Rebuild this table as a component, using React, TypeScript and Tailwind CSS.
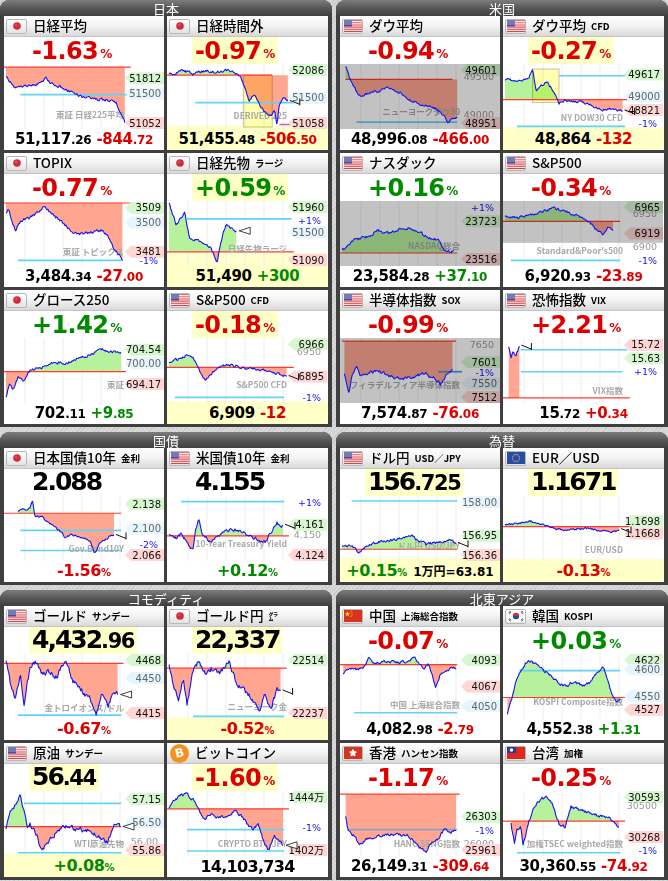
import React from 'react';

const NUM = "font-['DejaVu_Sans',sans-serif]";
const JPF = "font-['Noto_Sans_CJK_JP',sans-serif]";

type Lbl = { t: string; y: number; k: 'hi' | 'lo' | 'mid' | 'pct' | 'faint' };
type HLine = { y: number; x0: number; x1: number; c?: string };
type ChartSpec = {
  seed: number;
  pts: [number, number][];
  base: number;
  baseX?: [number, number];
  noise?: number;
  blue?: HLine[];
  labels: Lbl[];
  wm: string;
  wmY?: number;
  gray?: [number, number];
  box?: [number, number, number, number];
  yellowFrom?: number;
  upRed?: boolean;
  marker?: 'tri' | 'tick';
};

type Top =
  | { kind: 'pct'; v: string; c: 'r' | 'g'; y?: boolean }
  | { kind: 'val'; v: string; d?: string; y?: boolean };
type Bottom =
  | { kind: 'num'; n: string; d?: string; c: string; cd?: string; col: 'r' | 'g'; y?: boolean }
  | { kind: 'pct'; v: string; col: 'r' | 'g'; extra?: string; y?: boolean }
  | { kind: 'big'; v: string };

type CardSpec = {
  name: string;
  sub?: string;
  flag: 'jp' | 'us' | 'eu' | 'cn' | 'kr' | 'hk' | 'tw' | 'btc';
  top: Top;
  bottom: Bottom;
  chart: ChartSpec;
};

function rng(seed: number) {
  let a = seed >>> 0;
  return () => {
    a = (a + 0x6d2b79f5) >>> 0;
    let t = a;
    t = Math.imul(t ^ (t >>> 15), t | 1);
    t ^= t + Math.imul(t ^ (t >>> 7), t | 61);
    return ((t ^ (t >>> 14)) >>> 0) / 4294967296;
  };
}

const W = 160;
const H = 65;
const X = (x: number) => 2 + x * 120;
const Y = (y: number) => 2 + y * 61;

function makeSeries(s: ChartSpec): [number, number][] {
  const rnd = rng(s.seed);
  const pts = s.pts;
  const amp = s.noise ?? 3;
  const x0 = pts[0][0];
  const x1 = pts[pts.length - 1][0];
  const N = Math.max(4, Math.round((x1 - x0) * 140));
  const out: [number, number][] = [];
  let j = 0;
  let n = 0;
  for (let i = 0; i <= N; i++) {
    const x = x0 + ((x1 - x0) * i) / N;
    while (j < pts.length - 2 && x > pts[j + 1][0]) j++;
    const [ax, ay] = pts[j];
    const [bx, by] = pts[j + 1];
    const t = bx === ax ? 0 : (x - ax) / (bx - ax);
    const y = ay + (by - ay) * t;
    n = n * 0.45 + (rnd() - 0.5) * amp;
    let py = Y(y) + n;
    py = Math.max(1, Math.min(H - 1, py));
    out.push([X(x), py]);
  }
  return out;
}

function Chart({ s }: { s: ChartSpec }) {
  const ser = makeSeries(s);
  const by = Y(s.base);
  const bx = s.baseX ?? [-0.02, 1.03];
  const first = ser[0];
  const last = ser[ser.length - 1];
  const down = ser.map(([x, y]) => `${x},${Math.max(y, by)}`).join(' ') + ` ${last[0]},${by} ${first[0]},${by}`;
  const up = ser.map(([x, y]) => `${x},${Math.min(y, by)}`).join(' ') + ` ${last[0]},${by} ${first[0]},${by}`;
  const red = '#ffa590';
  const green = '#b6f19c';
  const line = ser.map(([x, y]) => `${x},${y}`).join(' ');
  const grid = [1, 2, 3, 4, 5, 6].map((k) => 2 + 19 * k);
  const [lx, ly] = last;
  return (
    <svg width={W} height={H} viewBox={`0 0 ${W} ${H}`} className="block shrink-0">
      {s.yellowFrom !== undefined && (
        <rect x={0} y={Y(s.yellowFrom)} width={W} height={H} fill="#ffffcc" />
      )}
      {grid.map((g) => (
        <line key={g} x1={g} x2={g} y1={0} y2={H} stroke="#ededed" strokeWidth={1} />
      ))}
      <polygon points={down} fill={red} />
      <polygon points={up} fill={s.upRed ? red : green} />
      {s.box && (
        <rect
          x={X(s.box[0])}
          y={Y(s.box[1])}
          width={X(s.box[2]) - X(s.box[0])}
          height={Y(s.box[3]) - Y(s.box[1])}
          fill="#ffffb0"
          stroke="#c9c4a0"
          strokeWidth={1}
          className="mix-blend-multiply"
        />
      )}
      <line x1={X(bx[0])} x2={X(bx[1])} y1={by} y2={by} stroke="#ff3b30" strokeWidth={1.2} />
      {(s.blue ?? []).map((b, i) => (
        <line key={i} x1={X(b.x0)} x2={X(b.x1)} y1={Y(b.y)} y2={Y(b.y)} stroke={b.c ?? '#62d3f7'} strokeWidth={1.6} />
      ))}
      <text
        x={120}
        y={Y(s.wmY ?? 0.86) + 3}
        textAnchor="end"
        fontSize={8.5}
        fontWeight={700}
        fill="#a9a9a9"
        fontFamily="'Noto Sans CJK JP', 'DejaVu Sans', sans-serif"
      >
        {s.wm}
      </text>
      {s.labels.map((l, i) => {
        const yy = Math.max(6, Math.min(H - 6, Y(l.y)));
        if (l.k === 'pct' || l.k === 'faint') {
          return (
            <text
              key={i}
              x={154}
              y={yy + 3.5}
              textAnchor="end"
              fontSize={9.5}
              fill={l.k === 'pct' ? '#1010ff' : '#9a9a9a'}
              fontFamily="'DejaVu Sans', sans-serif"
            >
              {l.t}
            </text>
          );
        }
        const fill = l.k === 'hi' ? '#d6f7cf' : l.k === 'lo' ? '#ffd6d4' : '#e6f6fe';
        const tc = l.k === 'mid' ? '#666' : '#111';
        return (
          <g key={i}>
            <polygon points={`121,${yy} 127,${yy - 6} 160,${yy - 6} 160,${yy + 6} 127,${yy + 6}`} fill={fill} />
            <text
              x={157}
              y={yy + 3.6}
              textAnchor="end"
              fontSize={10}
              fill={tc}
              fontFamily="'DejaVu Sans', 'Noto Sans CJK JP', sans-serif"
            >
              {l.t}
            </text>
          </g>
        );
      })}
      {s.gray && (
        <rect x={0} y={Y(s.gray[0]) - 2} width={W} height={Y(s.gray[1]) - Y(s.gray[0]) + 4} fill="#c2c2c2" className="mix-blend-multiply" />
      )}
      <polyline points={line} fill="none" stroke="#1414f0" strokeWidth={1.1} strokeLinejoin="round" />
      {s.marker === 'tri' && (
        <polygon points={`${lx + 3},${ly} ${lx + 14},${ly - 3.5} ${lx + 14},${ly + 3.5}`} fill="#fff" stroke="#111" strokeWidth={0.8} />
      )}
      {s.marker === 'tick' && (
        <g stroke="#111" strokeWidth={1}>
          <line x1={lx + 2} y1={ly - 1} x2={lx + 12} y2={ly + 3} />
          <line x1={lx + 12} y1={ly - 3} x2={lx + 12} y2={ly + 4} />
        </g>
      )}
    </svg>
  );
}

function Flag({ k }: { k: CardSpec['flag'] }) {
  if (k === 'btc') {
    return (
      <div className="w-[19px] h-[19px] rounded-full bg-[#f4921d] flex items-center justify-center ml-[1px]">
        <span className={`${NUM} text-white font-bold text-[12px] leading-none -rotate-[14deg]`}>B</span>
      </div>
    );
  }
  let inner: React.ReactNode = null;
  if (k === 'jp') {
    inner = (
      <svg width={18} height={12} viewBox="0 0 18 12">
        <circle cx={9} cy={6} r={3.8} fill="#d3293d" />
        <circle cx={8.2} cy={5} r={1.4} fill="#e86070" opacity={0.6} />
      </svg>
    );
  } else if (k === 'us') {
    inner = (
      <svg width={18} height={12} viewBox="0 0 18 12">
        <rect width={18} height={12} fill="#fff" />
        {Array.from({ length: 7 }).map((_, i) => (
          <rect key={i} x={0} y={i * (12 / 6.5)} width={18} height={12 / 13} fill="#d8343c" />
        ))}
        <rect x={0} y={0} width={8} height={6.5} fill="#4a4c9c" />
        <rect x={0} y={0} width={18} height={5} fill="#fff" opacity={0.25} />
      </svg>
    );
  } else if (k === 'eu') {
    inner = (
      <svg width={18} height={12} viewBox="0 0 18 12">
        <rect width={18} height={12} fill="#2a4aa8" />
        {Array.from({ length: 12 }).map((_, i) => {
          const a = (i / 12) * Math.PI * 2;
          return <circle key={i} cx={9 + Math.cos(a) * 3.6} cy={6 + Math.sin(a) * 3.6} r={0.55} fill="#f2d53c" />;
        })}
      </svg>
    );
  } else if (k === 'cn') {
    inner = (
      <svg width={18} height={12} viewBox="0 0 18 12">
        <rect width={18} height={12} fill="#d9321f" />
        <polygon points="3.5,1.2 4.3,3.2 6.3,3.2 4.7,4.4 5.3,6.4 3.5,5.2 1.7,6.4 2.3,4.4 0.7,3.2 2.7,3.2" fill="#ffd21f" />
        <circle cx={7} cy={1.5} r={0.6} fill="#ffd21f" />
        <circle cx={8} cy={3} r={0.6} fill="#ffd21f" />
        <circle cx={8} cy={5} r={0.6} fill="#ffd21f" />
        <circle cx={7} cy={6.5} r={0.6} fill="#ffd21f" />
      </svg>
    );
  } else if (k === 'kr') {
    inner = (
      <svg width={18} height={12} viewBox="0 0 18 12">
        <rect width={18} height={12} fill="#fff" />
        <path d="M5.8,6 A3.2,3.2 0 0 1 12.2,6 Z" fill="#cd2e3a" />
        <path d="M5.8,6 A3.2,3.2 0 0 0 12.2,6 Z" fill="#1d4ea0" />
        <g fill="#222">
          <rect x={1.5} y={1.5} width={2.6} height={0.6} transform="rotate(-35 2.8 1.8)" />
          <rect x={1.8} y={2.6} width={2.6} height={0.6} transform="rotate(-35 3.1 2.9)" />
          <rect x={14} y={1.5} width={2.6} height={0.6} transform="rotate(35 15.3 1.8)" />
          <rect x={13.7} y={2.6} width={2.6} height={0.6} transform="rotate(35 15 2.9)" />
          <rect x={1.8} y={9} width={2.6} height={0.6} transform="rotate(35 3.1 9.3)" />
          <rect x={1.5} y={10.1} width={2.6} height={0.6} transform="rotate(35 2.8 10.4)" />
          <rect x={13.7} y={9} width={2.6} height={0.6} transform="rotate(-35 15 9.3)" />
          <rect x={14} y={10.1} width={2.6} height={0.6} transform="rotate(-35 15.3 10.4)" />
        </g>
      </svg>
    );
  } else if (k === 'hk') {
    inner = (
      <svg width={18} height={12} viewBox="0 0 18 12">
        <rect width={18} height={12} fill="#d9321f" />
        {[0, 72, 144, 216, 288].map((r) => (
          <ellipse key={r} cx={9} cy={4.2} rx={1.2} ry={1.9} fill="#fff" transform={`rotate(${r} 9 6)`} />
        ))}
      </svg>
    );
  } else if (k === 'tw') {
    inner = (
      <svg width={18} height={12} viewBox="0 0 18 12">
        <rect width={18} height={12} fill="#e0261f" />
        <rect width={9} height={6} fill="#1f3aa0" />
        <circle cx={4.5} cy={3} r={1.8} fill="#fff" />
      </svg>
    );
  }
  return (
    <div className="w-[21px] h-[15px] rounded-[2px] border border-[#b7b7b7] bg-linear-to-b from-white to-[#e3e3e3] flex items-center justify-center">
      {inner}
    </div>
  );
}

function TopRow({ t }: { t: Top }) {
  if (t.kind === 'pct') {
    return (
      <div className="h-[27px] shrink-0 flex pl-[25px]">
        <div className={`h-full flex items-center px-[3px] ${t.y ? 'bg-[#ffffc8]' : ''}`}>
          <span
            className={`${NUM} font-bold text-[24px] leading-none tracking-[-0.6px] ${t.c === 'g' ? 'text-[#008a00]' : 'text-[#dc0000]'}`}
          >
            {t.v}
          </span>
          <span className={`${NUM} font-bold text-[12px] leading-none ml-[2px] mt-[7px] ${t.c === 'g' ? 'text-[#008a00]' : 'text-[#dc0000]'}`}>
            %
          </span>
        </div>
      </div>
    );
  }
  return (
    <div className="h-[27px] shrink-0 flex pl-[25px]">
      <div className={`h-full flex items-end pb-[2px] px-[3px] ${t.y ? 'bg-[#ffffc8]' : ''}`}>
        <span className={`${NUM} font-bold text-[25px] leading-none tracking-[-2px] text-black`}>{t.v}</span>
        {t.d && <span className={`${NUM} font-bold text-[21px] leading-none tracking-[-1.4px] text-black`}>{t.d}</span>}
      </div>
    </div>
  );
}

function BottomRow({ b }: { b: Bottom }) {
  if (b.kind === 'num') {
    const col = b.col === 'g' ? 'text-[#008a00]' : 'text-[#dc0000]';
    return (
      <div className={`flex-1 min-h-0 flex items-center justify-center ${NUM} font-bold tracking-[-0.3px] ${b.y ? 'bg-[#ffffc8]' : ''}`}>
        <div className="flex items-baseline leading-[17px]">
          <span className="text-[15px] text-black">{b.n}</span>
          {b.d && <span className="text-[12px] text-black">{b.d}</span>}
          <span className={`text-[15px] ml-[5px] ${col}`}>{b.c}</span>
          {b.cd && <span className={`text-[12px] ${col}`}>{b.cd}</span>}
        </div>
      </div>
    );
  }
  if (b.kind === 'pct') {
    const col = b.col === 'g' ? 'text-[#008a00]' : 'text-[#dc0000]';
    return (
      <div className={`flex-1 min-h-0 flex items-center justify-center ${NUM} font-bold ${b.y ? 'bg-[#ffffc8]' : ''}`}>
        <div className="flex items-baseline leading-[17px]">
          <span className={`text-[16px] tracking-[-0.4px] ${col}`}>{b.v}</span>
          <span className={`text-[10px] ${col}`}>%</span>
          {b.extra && <span className="text-[12px] text-black ml-[6px] font-['DejaVu_Sans','Noto_Sans_CJK_JP',sans-serif]">{b.extra}</span>}
        </div>
      </div>
    );
  }
  return (
    <div className={`flex-1 min-h-0 flex items-center justify-center ${NUM} font-bold`}>
      <span className="text-[16px] leading-[17px] tracking-[-0.7px] text-black">{b.v}</span>
    </div>
  );
}

function Card({ c }: { c: CardSpec }) {
  return (
    <div className="h-[134px] bg-white flex flex-col overflow-hidden">
      <div className="h-[21px] shrink-0 flex items-center bg-linear-to-b from-white via-[#f3f3f3] to-[#d9d9d9] border-b border-[#c4c4c4] pl-[2px]">
        <Flag k={c.flag} />
        <span className={`${JPF} text-[13.5px] font-medium text-black ml-[6px] leading-none`}>{c.name}</span>
        {c.sub && <span className={`${JPF} text-[9.5px] font-bold text-black ml-[5px] leading-none mt-[2px]`}>{c.sub}</span>}
      </div>
      <TopRow t={c.top} />
      <Chart s={c.chart} />
      <BottomRow b={c.bottom} />
    </div>
  );
}

function Section({ title, cards }: { title: string; cards: CardSpec[] }) {
  return (
    <div className="rounded-t-[9px] bg-[#3f3f3f] pb-[3px] overflow-hidden">
      <div className={`h-[16px] flex items-center justify-center bg-linear-to-b from-[#7d7d7d] via-[#585858] to-[#3f3f3f] text-white text-[13px] leading-none ${JPF}`}>
        {title}
      </div>
      <div className="grid grid-cols-[160px_161px] gap-[3px] pl-[4px]">
        {cards.map((c, i) => (
          <Card key={i} c={c} />
        ))}
      </div>
    </div>
  );
}

const c1: CardSpec = {
  name: '日経平均', flag: 'jp',
  top: { kind: 'pct', v: '-1.63', c: 'r' },
  bottom: { kind: 'num', n: '51,117', d: '.26', c: '-844', cd: '.72', col: 'r' },
  chart: {
    seed: 1, base: 0.02, baseX: [-0.02, 1.04], noise: 2.5,
    pts: [[0, 0.18], [0.03, 0.24], [0.08, 0.36], [0.15, 0.34], [0.25, 0.3], [0.3, 0.27], [0.33, 0.2], [0.37, 0.27], [0.4, 0.29], [0.58, 0.46], [0.65, 0.52], [0.75, 0.54], [0.85, 0.56], [0.92, 0.6], [0.96, 0.8], [0.99, 0.92]],
    blue: [{ y: 0.47, x0: 0.12, x1: 1.04 }],
    labels: [{ t: '51812', y: 0.2, k: 'hi' }, { t: '51500', y: 0.45, k: 'mid' }, { t: '51052', y: 0.95, k: 'lo' }],
    wm: '東証 日経225平均', wmY: 0.8,
  },
};
const c2: CardSpec = {
  name: '日経時間外', flag: 'jp',
  top: { kind: 'pct', v: '-0.97', c: 'r', y: true },
  bottom: { kind: 'num', n: '51,455', d: '.48', c: '-506', cd: '.50', col: 'r', y: true },
  chart: {
    seed: 2, base: 0.15, baseX: [-0.02, 0.86], noise: 2.2,
    pts: [[0, 0.12], [0.05, 0.14], [0.1, 0.06], [0.2, 0.13], [0.3, 0.08], [0.4, 0.1], [0.5, 0.06], [0.56, 0.12], [0.6, 0.2], [0.64, 0.4], [0.67, 0.58], [0.71, 0.46], [0.75, 0.62], [0.8, 0.76], [0.85, 0.82], [0.88, 0.72], [0.9, 0.98], [0.92, 0.62], [0.96, 0.52], [0.99, 0.57]],
    blue: [{ y: 0.6, x0: 0.22, x1: 1.04 }, { y: 0.96, x0: 0.92, x1: 1.04, c: '#e24ae0' }],
    box: [0.62, 0.15, 0.86, 1.0],
    labels: [{ t: '52086', y: 0.02, k: 'hi' }, { t: '51500', y: 0.52, k: 'mid' }, { t: '51058', y: 0.98, k: 'lo' }],
    wm: 'DERIVED 225', wmY: 0.82, yellowFrom: 0.98, marker: 'tick',
  },
};
const c3: CardSpec = {
  name: 'ダウ平均', flag: 'us',
  top: { kind: 'pct', v: '-0.94', c: 'r' },
  bottom: { kind: 'num', n: '48,996', d: '.08', c: '-466', cd: '.00', col: 'r' },
  chart: {
    seed: 3, base: 0.22, baseX: [0.03, 0.92], noise: 2.2,
    pts: [[0.03, 0.0], [0.05, 0.12], [0.08, 0.28], [0.12, 0.42], [0.16, 0.5], [0.22, 0.44], [0.3, 0.42], [0.38, 0.34], [0.45, 0.4], [0.5, 0.46], [0.55, 0.55], [0.62, 0.6], [0.7, 0.64], [0.78, 0.7], [0.84, 0.8], [0.88, 0.92], [0.93, 0.86], [0.96, 0.84]],
    blue: [{ y: 0.92, x0: 0.12, x1: 0.96 }],
    gray: [0, 1],
    labels: [{ t: '49601', y: 0.06, k: 'hi' }, { t: '49500', y: 0.17, k: 'faint' }, { t: '49000', y: 0.8, k: 'faint' }, { t: '48951', y: 0.95, k: 'lo' }],
    wm: 'ニューヨークダウ30', wmY: 0.76,
  },
};
const c4: CardSpec = {
  name: 'ダウ平均', sub: 'CFD', flag: 'us',
  top: { kind: 'pct', v: '-0.27', c: 'r', y: true },
  bottom: { kind: 'num', n: '48,864', c: '-132', col: 'r', y: true },
  chart: {
    seed: 4, base: 0.55, baseX: [-0.02, 1.04], noise: 2,
    pts: [[0, 0.22], [0.1, 0.24], [0.2, 0.2], [0.23, 0.05], [0.26, 0.42], [0.3, 0.32], [0.35, 0.26], [0.42, 0.46], [0.45, 0.62], [0.5, 0.56], [0.6, 0.58], [0.7, 0.62], [0.8, 0.72], [0.9, 0.7], [0.98, 0.74]],
    box: [0.23, 0.05, 0.45, 0.6],
    blue: [{ y: 0.16, x0: 0.45, x1: 1.0 }, { y: 0.99, x0: 0.1, x1: 1.0 }],
    labels: [{ t: '49617', y: 0.14, k: 'hi' }, { t: '49000', y: 0.5, k: 'mid' }, { t: '48821', y: 0.72, k: 'lo' }, { t: '-1%', y: 0.98, k: 'pct' }],
    wm: 'NY DOW30 CFD', wmY: 0.86, yellowFrom: 1.0, marker: 'tick',
  },
};
const c5: CardSpec = {
  name: 'TOPIX', flag: 'jp',
  top: { kind: 'pct', v: '-0.77', c: 'r' },
  bottom: { kind: 'num', n: '3,484', d: '.34', c: '-27', cd: '.00', col: 'r' },
  chart: {
    seed: 5, base: 0.0, baseX: [-0.02, 1.04], noise: 2.6,
    pts: [[0, 0.16], [0.02, 0.1], [0.05, 0.3], [0.08, 0.45], [0.12, 0.3], [0.2, 0.24], [0.28, 0.12], [0.32, 0.05], [0.35, 0.12], [0.55, 0.46], [0.6, 0.52], [0.7, 0.48], [0.8, 0.45], [0.85, 0.55], [0.9, 0.75], [0.95, 0.88], [0.97, 0.95]],
    blue: [{ y: 0.94, x0: 0.1, x1: 0.96 }],
    labels: [{ t: '3509', y: 0.08, k: 'hi' }, { t: '3500', y: 0.32, k: 'mid' }, { t: '3481', y: 0.8, k: 'lo' }, { t: '-1%', y: 0.96, k: 'pct' }],
    wm: '東証 トピックス', wmY: 0.8,
  },
};
const c6: CardSpec = {
  name: '日経先物', sub: 'ラージ', flag: 'jp',
  top: { kind: 'pct', v: '+0.59', c: 'g', y: true },
  bottom: { kind: 'num', n: '51,490', c: '+300', col: 'g', y: true },
  chart: {
    seed: 6, base: 0.8, baseX: [-0.02, 1.04], noise: 2.5,
    pts: [[0, 0.0], [0.03, 0.2], [0.06, 0.35], [0.1, 0.26], [0.13, 0.15], [0.17, 0.55], [0.22, 0.6], [0.3, 0.66], [0.35, 0.74], [0.38, 0.9], [0.4, 1.0], [0.42, 0.78], [0.45, 0.5], [0.48, 0.36], [0.52, 0.42], [0.56, 0.46]],
    blue: [{ y: 0.26, x0: 0.15, x1: 1.02 }],
    labels: [{ t: '51960', y: 0.06, k: 'hi' }, { t: '+1%', y: 0.28, k: 'pct' }, { t: '51500', y: 0.48, k: 'mid' }, { t: '51090', y: 0.97, k: 'lo' }],
    wm: '日経先物ラージ', wmY: 0.76, yellowFrom: 0.82, marker: 'tri',
  },
};
const c7: CardSpec = {
  name: 'ナスダック', flag: 'us',
  top: { kind: 'pct', v: '+0.16', c: 'g' },
  bottom: { kind: 'num', n: '23,584', d: '.28', c: '+37', cd: '.10', col: 'g' },
  chart: {
    seed: 7, base: 0.82, baseX: [-0.02, 0.96], noise: 2.5,
    pts: [[0, 0.78], [0.05, 0.7], [0.1, 0.6], [0.2, 0.56], [0.3, 0.46], [0.4, 0.5], [0.5, 0.4], [0.6, 0.43], [0.7, 0.55], [0.8, 0.6], [0.85, 0.75], [0.9, 0.8], [0.93, 0.78]],
    gray: [0, 1],
    labels: [{ t: '+1%', y: 0.02, k: 'pct' }, { t: '23723', y: 0.3, k: 'hi' }, { t: '23516', y: 0.92, k: 'lo' }],
    wm: 'NASDAQ総合', wmY: 0.7,
  },
};
const c8: CardSpec = {
  name: 'S&P500', flag: 'us',
  top: { kind: 'pct', v: '-0.34', c: 'r' },
  bottom: { kind: 'num', n: '6,920', d: '.93', c: '-23', cd: '.89', col: 'r' },
  chart: {
    seed: 8, base: 0.3, baseX: [-0.02, 0.96], noise: 2.3,
    pts: [[0, 0.22], [0.1, 0.25], [0.2, 0.2], [0.3, 0.15], [0.4, 0.08], [0.5, 0.14], [0.6, 0.2], [0.7, 0.3], [0.76, 0.44], [0.82, 0.52], [0.86, 0.4], [0.9, 0.46]],
    gray: [0, 0.62],
    blue: [{ y: 0.94, x0: 0.05, x1: 0.96 }],
    labels: [{ t: '6965', y: 0.04, k: 'hi' }, { t: '6950', y: 0.17, k: 'faint' }, { t: '6919', y: 0.5, k: 'lo' }, { t: '6900', y: 0.72, k: 'faint' }, { t: '-1%', y: 0.94, k: 'pct' }],
    wm: "Standard&Poor's500", wmY: 0.78,
  },
};
const c9: CardSpec = {
  name: 'グロース250', flag: 'jp',
  top: { kind: 'pct', v: '+1.42', c: 'g' },
  bottom: { kind: 'num', n: '702', d: '.11', c: '+9', cd: '.85', col: 'g' },
  chart: {
    seed: 9, base: 0.52, baseX: [-0.02, 1.0], noise: 2.4,
    pts: [[0, 0.95], [0.03, 0.7], [0.06, 0.82], [0.1, 0.6], [0.15, 0.66], [0.2, 0.5], [0.3, 0.45], [0.4, 0.36], [0.5, 0.38], [0.6, 0.3], [0.7, 0.25], [0.8, 0.15], [0.86, 0.18], [0.96, 0.2]],
    labels: [{ t: '704.54', y: 0.16, k: 'hi' }, { t: '700.00', y: 0.38, k: 'mid' }, { t: '694.17', y: 0.72, k: 'lo' }],
    wm: '東証', wmY: 0.74,
  },
};
const c10: CardSpec = {
  name: 'S&P500', sub: 'CFD', flag: 'us',
  top: { kind: 'pct', v: '-0.18', c: 'r', y: true },
  bottom: { kind: 'num', n: '6,909', c: '-12', col: 'r', y: true },
  chart: {
    seed: 10, base: 0.45, baseX: [-0.02, 1.04], noise: 2.2,
    pts: [[0, 0.36], [0.1, 0.3], [0.15, 0.24], [0.2, 0.3], [0.25, 0.5], [0.3, 0.66], [0.35, 0.56], [0.4, 0.46], [0.5, 0.4], [0.6, 0.45], [0.7, 0.47], [0.8, 0.5], [0.9, 0.55], [0.98, 0.6]],
    blue: [{ y: 0.94, x0: 0.05, x1: 0.96 }],
    labels: [{ t: '6966', y: 0.07, k: 'hi' }, { t: '6950', y: 0.19, k: 'faint' }, { t: '6895', y: 0.6, k: 'lo' }, { t: '-1%', y: 0.94, k: 'pct' }],
    wm: 'S&P500 CFD', wmY: 0.74, yellowFrom: 1.0, marker: 'tick',
  },
};
const c11: CardSpec = {
  name: '半導体指数', sub: 'SOX', flag: 'us',
  top: { kind: 'pct', v: '-0.99', c: 'r' },
  bottom: { kind: 'num', n: '7,574', d: '.87', c: '-76', cd: '.06', col: 'r' },
  chart: {
    seed: 11, base: 0.02, baseX: [0.0, 0.95], noise: 3,
    pts: [[0.02, 0.55], [0.04, 0.72], [0.06, 0.88], [0.08, 0.6], [0.12, 0.42], [0.15, 0.6], [0.2, 0.55], [0.3, 0.5], [0.4, 0.6], [0.5, 0.64], [0.6, 0.6], [0.7, 0.55], [0.78, 0.64], [0.82, 0.72], [0.88, 0.55], [0.92, 0.5]],
    gray: [0, 1],
    blue: [{ y: 0.52, x0: 0.8, x1: 1.0, c: '#3a9ac8' }],
    labels: [{ t: '7650', y: 0.02, k: 'faint' }, { t: '7601', y: 0.36, k: 'hi' }, { t: '-1%', y: 0.53, k: 'pct' }, { t: '7550', y: 0.71, k: 'mid' }, { t: '7512', y: 0.94, k: 'lo' }],
    wm: 'フィラデルフィア半導体指数', wmY: 0.74,
  },
};
const c12: CardSpec = {
  name: '恐怖指数', sub: 'VIX', flag: 'us',
  top: { kind: 'pct', v: '+2.21', c: 'r' },
  bottom: { kind: 'num', n: '15', d: '.72', c: '+0', cd: '.34', col: 'r' },
  chart: {
    seed: 12, base: 0.95, baseX: [-0.02, 1.04], noise: 2.5, upRed: true,
    pts: [[0.03, 0.12], [0.05, 0.28], [0.07, 0.2], [0.09, 0.26], [0.12, 0.1]],
    blue: [{ y: 0.16, x0: 0.13, x1: 1.02 }, { y: 0.52, x0: 0.13, x1: 0.98 }],
    labels: [{ t: '15.72', y: 0.08, k: 'lo' }, { t: '15.63', y: 0.3, k: 'hi' }, { t: '+1%', y: 0.52, k: 'pct' }],
    wm: 'VIX指数', wmY: 0.84, marker: 'tick',
  },
};
const c13: CardSpec = {
  name: '日本国債10年', sub: '金利', flag: 'jp',
  top: { kind: 'val', v: '2.088' },
  bottom: { kind: 'pct', v: '-1.56', col: 'r' },
  chart: {
    seed: 13, base: 0.25, baseX: [-0.02, 0.96], noise: 2,
    pts: [[0.1, 0.22], [0.15, 0.2], [0.2, 0.17], [0.22, 0.03], [0.24, 0.3], [0.3, 0.32], [0.35, 0.4], [0.45, 0.55], [0.5, 0.65], [0.55, 0.6], [0.6, 0.62], [0.65, 0.65], [0.7, 0.72], [0.74, 0.9], [0.78, 0.75], [0.84, 0.66], [0.9, 0.6]],
    blue: [{ y: 0.53, x0: 0.12, x1: 0.96 }, { y: 0.86, x0: 0.12, x1: 0.96 }],
    labels: [{ t: '2.138', y: 0.1, k: 'hi' }, { t: '2.100', y: 0.5, k: 'mid' }, { t: '-2%', y: 0.76, k: 'pct' }, { t: '2.066', y: 0.97, k: 'lo' }],
    wm: 'Gov.Bond10Y', wmY: 0.84, marker: 'tick',
  },
};
const c14: CardSpec = {
  name: '米国債10年', sub: '金利', flag: 'us',
  top: { kind: 'val', v: '4.155' },
  bottom: { kind: 'pct', v: '+0.12', col: 'g' },
  chart: {
    seed: 14, base: 0.62, baseX: [-0.02, 1.0], noise: 3,
    pts: [[0, 0.6], [0.05, 0.66], [0.1, 0.6], [0.15, 0.72], [0.2, 0.86], [0.22, 0.55], [0.25, 0.35], [0.28, 0.6], [0.35, 0.74], [0.4, 0.64], [0.45, 0.55], [0.5, 0.52], [0.6, 0.53], [0.65, 0.6], [0.7, 0.66], [0.8, 0.72], [0.85, 0.56], [0.9, 0.42], [0.95, 0.46]],
    blue: [{ y: 0.06, x0: 0.1, x1: 0.96 }],
    labels: [{ t: '+1%', y: 0.06, k: 'pct' }, { t: '4.161', y: 0.44, k: 'hi' }, { t: '4.150', y: 0.6, k: 'faint' }, { t: '4.124', y: 0.95, k: 'lo' }],
    wm: '10-Year Treasury Yield', wmY: 0.76, marker: 'tick',
  },
};
const c15: CardSpec = {
  name: 'ドル円', sub: 'USD／JPY', flag: 'us',
  top: { kind: 'val', v: '156', d: '.725', y: true },
  bottom: { kind: 'pct', v: '+0.15', col: 'g', extra: '1万円=63.81', y: true },
  chart: {
    seed: 15, base: 0.84, baseX: [-0.02, 0.96], noise: 2.4,
    pts: [[0, 0.8], [0.05, 0.78], [0.1, 0.82], [0.15, 0.9], [0.2, 0.8], [0.3, 0.72], [0.4, 0.7], [0.5, 0.65], [0.58, 0.6], [0.63, 0.7], [0.7, 0.76], [0.8, 0.72], [0.9, 0.7], [0.95, 0.72]],
    blue: [{ y: 0.05, x0: 0.08, x1: 0.96 }],
    labels: [{ t: '158.00', y: 0.05, k: 'mid' }, { t: '156.95', y: 0.62, k: 'hi' }, { t: '156.36', y: 0.94, k: 'lo' }],
    wm: 'ドル円 USD/JPY', wmY: 0.78, yellowFrom: 0.98, marker: 'tick',
  },
};
const c16: CardSpec = {
  name: 'EUR／USD', flag: 'eu',
  top: { kind: 'val', v: '1.1671', y: true },
  bottom: { kind: 'pct', v: '-0.13', col: 'r', y: true },
  chart: {
    seed: 16, base: 0.47, baseX: [-0.02, 1.04], noise: 1.8,
    pts: [[0, 0.44], [0.1, 0.42], [0.2, 0.38], [0.3, 0.42], [0.4, 0.5], [0.5, 0.53], [0.6, 0.5], [0.7, 0.5], [0.8, 0.54], [0.9, 0.56], [0.95, 0.53]],
    labels: [{ t: '1.1698', y: 0.38, k: 'hi' }, { t: '1.1668', y: 0.58, k: 'lo' }],
    wm: 'EUR/USD', wmY: 0.86, yellowFrom: 1.0, marker: 'tick',
  },
};
const c17: CardSpec = {
  name: 'ゴールド', sub: 'サンデー', flag: 'us',
  top: { kind: 'val', v: '4,432', d: '.96', y: true },
  bottom: { kind: 'pct', v: '-0.67', col: 'r' },
  chart: {
    seed: 17, base: 0.12, baseX: [-0.02, 0.98], noise: 5,
    pts: [[0, 0.06], [0.04, 0.5], [0.08, 0.7], [0.12, 0.3], [0.15, 0.8], [0.2, 0.2], [0.25, 0.1], [0.3, 0.3], [0.35, 0.25], [0.42, 0.35], [0.5, 0.05], [0.55, 0.4], [0.62, 0.55], [0.7, 0.7], [0.75, 0.95], [0.8, 0.6], [0.85, 0.85], [0.9, 0.6], [0.93, 0.64]],
    blue: [{ y: 0.97, x0: 0.1, x1: 0.96 }],
    labels: [{ t: '4468', y: 0.04, k: 'hi' }, { t: '4450', y: 0.36, k: 'mid' }, { t: '4415', y: 0.97, k: 'lo' }],
    wm: '金トロイオンス/ドル', wmY: 0.86, marker: 'tri',
  },
};
const c18: CardSpec = {
  name: 'ゴールド円', sub: '㌘', flag: 'jp',
  top: { kind: 'val', v: '22,337', y: true },
  bottom: { kind: 'pct', v: '-0.52', col: 'r', y: true },
  chart: {
    seed: 18, base: 0.2, baseX: [-0.02, 0.98], noise: 5,
    pts: [[0, 0.15], [0.04, 0.5], [0.08, 0.75], [0.12, 0.35], [0.15, 0.8], [0.2, 0.25], [0.25, 0.05], [0.3, 0.3], [0.35, 0.2], [0.42, 0.3], [0.5, 0.04], [0.55, 0.4], [0.62, 0.55], [0.7, 0.72], [0.75, 0.95], [0.8, 0.62], [0.85, 0.85], [0.9, 0.55], [0.93, 0.58]],
    blue: [{ y: 0.99, x0: 0.2, x1: 0.96 }],
    labels: [{ t: '22514', y: 0.04, k: 'hi' }, { t: '22237', y: 0.96, k: 'lo' }],
    wm: 'ニューヨーク金', wmY: 0.84, yellowFrom: 1.0, marker: 'tick',
  },
};
const c19: CardSpec = {
  name: '原油', sub: 'サンデー', flag: 'us',
  top: { kind: 'val', v: '56', d: '.44', y: true },
  bottom: { kind: 'pct', v: '+0.08', col: 'g', y: true },
  chart: {
    seed: 19, base: 0.55, baseX: [-0.02, 0.96], noise: 4,
    pts: [[0, 0.62], [0.03, 0.3], [0.08, 0.2], [0.12, 0.05], [0.15, 0.3], [0.18, 0.6], [0.2, 0.5], [0.25, 0.66], [0.3, 0.95], [0.35, 0.8], [0.4, 0.7], [0.45, 0.6], [0.5, 0.55], [0.6, 0.6], [0.7, 0.62], [0.8, 0.75], [0.85, 0.8], [0.9, 0.5], [0.95, 0.54]],
    blue: [{ y: 0.17, x0: 0.15, x1: 0.96 }, { y: 0.98, x0: 0.1, x1: 0.96 }],
    labels: [{ t: '57.15', y: 0.1, k: 'hi' }, { t: '56.50', y: 0.48, k: 'mid' }, { t: '56.00', y: 0.8, k: 'faint' }, { t: '55.86', y: 0.97, k: 'lo' }],
    wm: 'WTI原油先物', wmY: 0.84, yellowFrom: 1.0, marker: 'tri',
  },
};
const c20: CardSpec = {
  name: 'ビットコイン', flag: 'btc',
  top: { kind: 'pct', v: '-1.60', c: 'r', y: true },
  bottom: { kind: 'big', v: '14,103,734' },
  chart: {
    seed: 20, base: 0.26, baseX: [-0.02, 1.0], noise: 3,
    pts: [[0, 0.24], [0.05, 0.1], [0.1, 0.04], [0.15, 0.02], [0.2, 0.1], [0.25, 0.3], [0.3, 0.42], [0.35, 0.36], [0.45, 0.4], [0.55, 0.3], [0.6, 0.36], [0.65, 0.5], [0.7, 0.6], [0.74, 0.5], [0.8, 0.86], [0.83, 0.95], [0.88, 0.7], [0.93, 0.82], [0.95, 0.86]],
    blue: [{ y: 0.6, x0: 0.15, x1: 0.96 }, { y: 0.95, x0: 0.15, x1: 0.96 }],
    labels: [{ t: '1444万', y: 0.05, k: 'hi' }, { t: '-1%', y: 0.56, k: 'pct' }, { t: '1402万', y: 0.96, k: 'lo' }],
    wm: 'CRYPTO BTC/JPY', wmY: 0.84, marker: 'tri',
  },
};
const c21: CardSpec = {
  name: '中国', sub: '上海総合指数', flag: 'cn',
  top: { kind: 'pct', v: '-0.07', c: 'r' },
  bottom: { kind: 'num', n: '4,082', d: '.98', c: '-2', cd: '.79', col: 'r' },
  chart: {
    seed: 21, base: 0.14, baseX: [-0.02, 0.96], noise: 2.4,
    pts: [[0.01, 0.3], [0.05, 0.2], [0.12, 0.22], [0.18, 0.2], [0.22, 0.02], [0.26, 0.12], [0.3, 0.1], [0.55, 0.1], [0.6, 0.02], [0.64, 0.12], [0.68, 0.2], [0.72, 0.14], [0.75, 0.3], [0.78, 0.52], [0.82, 0.3], [0.86, 0.24], [0.92, 0.2], [0.95, 0.2]],
    blue: [{ y: 0.93, x0: 0.1, x1: 0.96 }],
    labels: [{ t: '4093', y: 0.02, k: 'hi' }, { t: '4067', y: 0.5, k: 'lo' }, { t: '4050', y: 0.82, k: 'mid' }],
    wm: '中国 上海総合指数', wmY: 0.8,
  },
};
const c22: CardSpec = {
  name: '韓国', sub: 'KOSPI', flag: 'kr',
  top: { kind: 'pct', v: '+0.03', c: 'g' },
  bottom: { kind: 'num', n: '4,552', d: '.38', c: '+1', cd: '.31', col: 'g' },
  chart: {
    seed: 22, base: 0.68, baseX: [-0.02, 1.0], noise: 3,
    pts: [[0.02, 0.95], [0.05, 0.75], [0.08, 0.5], [0.12, 0.3], [0.17, 0.12], [0.22, 0.1], [0.26, 0.15], [0.32, 0.25], [0.38, 0.32], [0.45, 0.45], [0.5, 0.5], [0.58, 0.44], [0.66, 0.48], [0.72, 0.4], [0.78, 0.25], [0.82, 0.2], [0.86, 0.4], [0.9, 0.68], [0.93, 0.74], [0.96, 0.7]],
    blue: [{ y: 0.24, x0: 0.12, x1: 0.96 }],
    labels: [{ t: '4622', y: 0.02, k: 'hi' }, { t: '4600', y: 0.22, k: 'mid' }, { t: '4550', y: 0.66, k: 'mid' }, { t: '4527', y: 0.88, k: 'lo' }],
    wm: 'KOSPI Composite指数', wmY: 0.76,
  },
};
const c23: CardSpec = {
  name: '香港', sub: 'ハンセン指数', flag: 'hk',
  top: { kind: 'pct', v: '-1.17', c: 'r' },
  bottom: { kind: 'num', n: '26,149', d: '.31', c: '-309', cd: '.64', col: 'r' },
  chart: {
    seed: 23, base: 0.02, baseX: [-0.02, 0.98], noise: 2.5,
    pts: [[0.03, 0.4], [0.05, 0.62], [0.1, 0.7], [0.15, 0.85], [0.2, 0.76], [0.3, 0.7], [0.38, 0.68], [0.55, 0.7], [0.6, 0.8], [0.65, 0.9], [0.7, 0.95], [0.75, 0.8], [0.8, 0.76], [0.85, 0.6], [0.9, 0.65], [0.95, 0.62]],
    blue: [{ y: 0.6, x0: 0.05, x1: 0.96, c: '#8aa6c2' }],
    labels: [{ t: '26303', y: 0.39, k: 'hi' }, { t: '-1%', y: 0.61, k: 'pct' }, { t: '26000', y: 0.82, k: 'faint' }, { t: '25961', y: 0.97, k: 'lo' }],
    wm: 'HANG SENG指数', wmY: 0.84,
  },
};
const c24: CardSpec = {
  name: '台湾', sub: '加権', flag: 'tw',
  top: { kind: 'pct', v: '-0.25', c: 'r' },
  bottom: { kind: 'num', n: '30,360', d: '.55', c: '-74', cd: '.92', col: 'r' },
  chart: {
    seed: 24, base: 0.46, baseX: [-0.02, 1.0], noise: 3,
    pts: [[0.05, 0.5], [0.08, 0.85], [0.1, 0.6], [0.13, 0.55], [0.15, 0.85], [0.2, 0.45], [0.25, 0.2], [0.3, 0.1], [0.35, 0.05], [0.4, 0.2], [0.45, 0.5], [0.5, 0.56], [0.52, 0.4], [0.55, 0.22], [0.65, 0.3], [0.75, 0.36], [0.85, 0.4], [0.9, 0.46], [0.95, 0.56]],
    blue: [{ y: 0.98, x0: 0.1, x1: 0.96 }],
    labels: [{ t: '30593', y: 0.05, k: 'hi' }, { t: '30500', y: 0.21, k: 'faint' }, { t: '30268', y: 0.72, k: 'lo' }, { t: '-1%', y: 0.94, k: 'pct' }],
    wm: '加権TSEC weighted指数', wmY: 0.84,
  },
};

export default function App() {
  return (
    <div className="w-[668px] h-[881px] overflow-hidden flex gap-[4px] bg-[#d2d2d2] bg-[repeating-linear-gradient(135deg,#dadada_0px,#dadada_2px,#c9c9c9_2px,#c9c9c9_3px)]">
      <div className="w-[332px] flex flex-col gap-[5px]">
        <Section title="日本" cards={[c1, c2, c5, c6, c9, c10]} />
        <Section title="国債" cards={[c13, c14]} />
        <Section title="コモディティ" cards={[c17, c18, c19, c20]} />
      </div>
      <div className="w-[332px] flex flex-col gap-[5px]">
        <Section title="米国" cards={[c3, c4, c7, c8, c11, c12]} />
        <Section title="為替" cards={[c15, c16]} />
        <Section title="北東アジア" cards={[c21, c22, c23, c24]} />
      </div>
    </div>
  );
}
